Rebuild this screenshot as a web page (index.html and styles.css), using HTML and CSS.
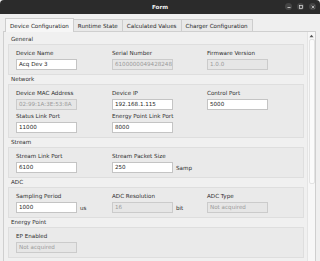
FILE: index.html
```html
<!DOCTYPE html>
<html>
<head>
<meta charset="utf-8">
<link rel="stylesheet" href="styles.css">
</head>
<body>
<div class="window">
  <div class="titlebar">
    <span class="title">Form</span>
    <div class="controls">
      <span class="ctl"><svg width="6" height="6" viewBox="0 0 6 6"><path d="M1.5 3.5h3" stroke="#ddd" stroke-width="0.8"/></svg></span>
      <span class="ctl"><svg width="6" height="6" viewBox="0 0 6 6"><rect x="1.6" y="1.6" width="2.8" height="2.8" fill="none" stroke="#ddd" stroke-width="0.7"/></svg></span>
      <span class="ctl"><svg width="6" height="6" viewBox="0 0 6 6"><path d="M1.7 1.7l2.6 2.6M4.3 1.7l-2.6 2.6" stroke="#ddd" stroke-width="0.7"/></svg></span>
    </div>
  </div>
  <div class="body">
    <div class="tabs">
      <div class="tab active">Device Configuration</div>
      <div class="tab">Runtime State</div>
      <div class="tab">Calculated Values</div>
      <div class="tab">Charger Configuration</div>
    </div>
    <div class="pane">
      <div class="sections">
        <div class="sec-title">General</div>
        <div class="box">
          <div class="field"><div class="lbl">Device Name</div><div class="inp">Acq Dev 3</div></div>
          <div class="field"><div class="lbl">Serial Number</div><div class="inp dis">6100000049428248</div></div>
          <div class="field"><div class="lbl">Firmware Version</div><div class="inp dis">1.0.0</div></div>
        </div>
        <div class="sec-title">Network</div>
        <div class="box">
          <div class="field"><div class="lbl">Device MAC Address</div><div class="inp dis">02:99:1A:3E:53:8A</div></div>
          <div class="field"><div class="lbl">Device IP</div><div class="inp">192.168.1.115</div></div>
          <div class="field"><div class="lbl">Control Port</div><div class="inp">5000</div></div>
          <div class="field"><div class="lbl">Status Link Port</div><div class="inp">11000</div></div>
          <div class="field"><div class="lbl">Energy Point Link Port</div><div class="inp">8000</div></div>
        </div>
        <div class="sec-title">Stream</div>
        <div class="box">
          <div class="field"><div class="lbl">Stream Link Port</div><div class="inp">6100</div></div>
          <div class="field"><div class="lbl">Stream Packet Size</div><div class="row"><div class="inp">250</div><span class="unit">Samp</span></div></div>
        </div>
        <div class="sec-title">ADC</div>
        <div class="box">
          <div class="field"><div class="lbl">Sampling Period</div><div class="row"><div class="inp">1000</div><span class="unit">us</span></div></div>
          <div class="field"><div class="lbl">ADC Resolution</div><div class="row"><div class="inp dis">16</div><span class="unit">bit</span></div></div>
          <div class="field"><div class="lbl">ADC Type</div><div class="inp dis">Not acquired</div></div>
        </div>
        <div class="sec-title">Energy Point</div>
        <div class="box">
          <div class="field"><div class="lbl">EP Enabled</div><div class="inp dis">Not acquired</div></div>
        </div>
      </div>
      <div class="scrollbar">
        <div class="arrow"><svg width="5" height="4" viewBox="0 0 5 4"><path d="M0.5 3.2L2.5 0.8L4.5 3.2Z" fill="#555"/></svg></div>
        <div class="handle"></div>
      </div>
    </div>
  </div>
</div>
</body>
</html>
```

FILE: styles.css
```css
* { box-sizing: border-box; }
html, body { margin: 0; padding: 0; }
body {
  width: 320px;
  height: 261px;
  overflow: hidden;
  background: #efefef;
  font-family: "DejaVu Sans", sans-serif;
  font-size: 5.6px;
  color: #262626;
}
.window {
  width: 320px;
  height: 261px;
  display: flex;
  flex-direction: column;
  background: #efefef;
  overflow: hidden;
}
.titlebar {
  height: 14px;
  flex: none;
  background: #2b2b2b;
  position: relative;
  display: flex;
  align-items: center;
  justify-content: center;
  border-radius: 4px 4px 0 0;
}
.title {
  color: #f2f2f2;
  font-weight: bold;
  font-size: 5.6px;
}
.controls {
  position: absolute;
  right: 4px;
  top: 3px;
  display: flex;
  gap: 5px;
}
.ctl {
  width: 7px;
  height: 7px;
  border-radius: 50%;
  background: #454545;
  display: flex;
  align-items: center;
  justify-content: center;
}
.ctl svg { display: block; }
.body {
  flex: 1;
  display: flex;
  flex-direction: column;
  padding: 3px 4px 0 3px;
  min-height: 0;
}
.tabs {
  display: flex;
  align-items: flex-end;
  padding-left: 2px;
  height: 14px;
  flex: none;
}
.tab {
  height: 12px;
  padding: 0 4px;
  display: flex;
  align-items: center;
  border: 1px solid #cdcdcd;
  border-bottom: none;
  border-left: none;
  background: #e9e9e9;
  color: #262626;
  white-space: nowrap;
}
.tab.active {
  height: 14px;
  background: #f6f6f6;
  border-left: 1px solid #cdcdcd;
  margin-bottom: -1px;
  position: relative;
  z-index: 1;
}
.pane {
  flex: 1;
  min-height: 0;
  border: 1px solid #cfcfcf;
  border-bottom: none;
  background: #f0f0f0;
  display: flex;
  padding: 3px 0 0 4px;
}
.sections {
  width: 296px;
  flex: none;
}
.sec-title {
  height: 9px;
  line-height: 9px;
  padding-left: 3px;
  color: #2e2e2e;
}
.box {
  border: 1px solid #dedede;
  background: #eaeaea;
  padding: 3px 0 4px 7px;
  display: grid;
  grid-template-columns: 96px 95px 95px;
  row-gap: 1px;
}
.field {
  display: flex;
  flex-direction: column;
  gap: 1px;
}
.lbl {
  height: 10px;
  line-height: 10px;
  color: #2e2e2e;
  white-space: nowrap;
}
.inp {
  width: 61px;
  height: 11px;
  line-height: 9px;
  background: #ffffff;
  border: 1px solid #c4c4c4;
  padding-left: 2px;
  color: #1e1e1e;
  white-space: nowrap;
  overflow: hidden;
}
.inp.dis {
  background: #e6e6e6;
  border-color: #cbcbcb;
  color: #9a9a9a;
}
.row {
  display: flex;
  align-items: center;
  gap: 3px;
}
.unit { color: #2e2e2e; white-space: nowrap; }
.scrollbar {
  margin-left: 3px;
  width: 8px;
  background: #f7f7f7;
  border-left: 1px solid #e4e4e4;
  display: flex;
  flex-direction: column;
  align-items: center;
  margin-top: -3px;
}
.arrow {
  height: 7px;
  display: flex;
  align-items: center;
  justify-content: center;
}
.handle {
  width: 6px;
  height: 145px;
  background: #fbfbfb;
  border: 1px solid #e3e3e3;
  border-radius: 2px;
}
```
